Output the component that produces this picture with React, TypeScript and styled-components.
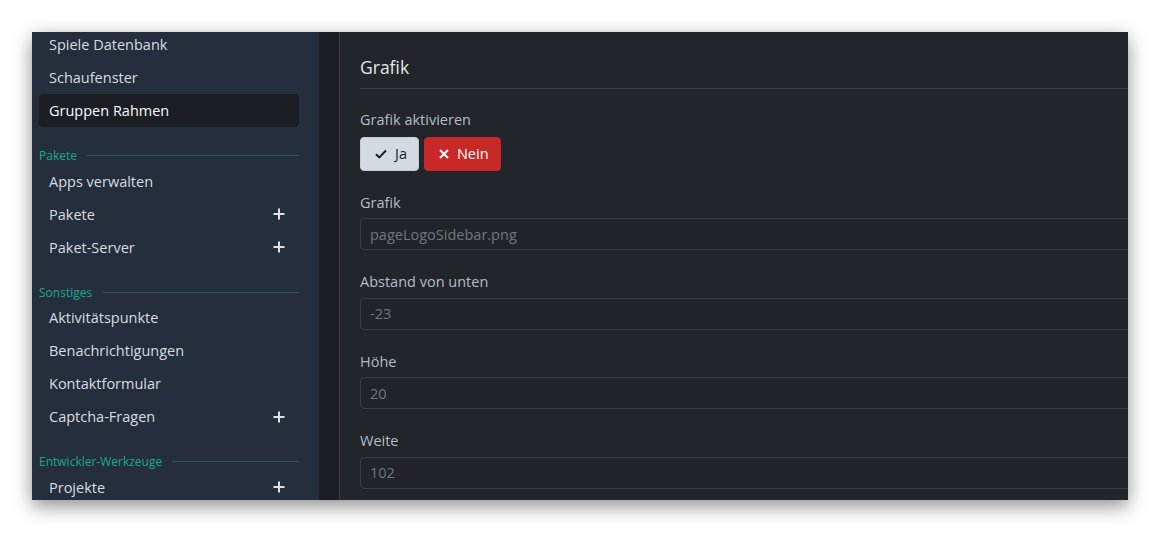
import React from "react";
import styled, { createGlobalStyle } from "styled-components";

const Global = createGlobalStyle`
  html, body { margin: 0; padding: 0; background: #ffffff; }
  body { font-family: "Segoe UI", "Open Sans", "Noto Sans", sans-serif; }
  * { box-sizing: border-box; }
`;

const Page = styled.div`
  width: 1160px;
  height: 533px;
  padding: 32px 32px 33px 32px;
  background: #ffffff;
`;

const Window = styled.div`
  display: flex;
  width: 1096px;
  height: 468px;
  overflow: hidden;
  background: #222529;
  box-shadow: 0 6px 18px rgba(0, 0, 0, 0.45);
`;

const Sidebar = styled.nav`
  flex: 0 0 287px;
  background: #252e3d;
  padding: 0 20px 0 7px;
  overflow: hidden;
`;

const NavList = styled.div`
  display: flex;
  flex-direction: column;
  margin-top: -4px;
`;

const NavItem = styled.div<{ $active?: boolean }>`
  display: flex;
  align-items: center;
  justify-content: space-between;
  flex: 0 0 33px;
  height: 33px;
  padding: 0 14px 0 10px;
  border-radius: 4px;
  font-size: 14.5px;
  color: ${(p) => (p.$active ? "#f8f9fa" : "#d7dce1")};
  background: ${(p) => (p.$active ? "#1b1e23" : "transparent")};
`;

const SectionHead = styled.div`
  display: flex;
  align-items: center;
  gap: 10px;
  flex: 0 0 20px;
  height: 20px;
  margin: 18.5px 0 -1px 0;
  font-size: 12px;
  color: #1aa88f;
  white-space: nowrap;
  &::after {
    content: "";
    flex: 1;
    height: 1px;
    background: #2a5660;
  }
`;

const Gutter = styled.div`
  flex: 0 0 21px;
  background: #1c1e22;
  border-right: 1px solid #383b40;
`;

const Content = styled.main`
  flex: 1;
  min-width: 0;
  padding: 23px 0 0 20px;
  color: #dee2e6;
`;

const Heading = styled.h2`
  margin: 0;
  padding-bottom: 9px;
  font-size: 17.5px;
  font-weight: 400;
  line-height: 24px;
  color: #e4e7ea;
  border-bottom: 1px solid #3d3f45;
`;

const Form = styled.div`
  display: flex;
  flex-direction: column;
  padding-top: 21px;
`;

const Group = styled.div`
  display: flex;
  flex-direction: column;
  margin-bottom: 22px;
`;

const Label = styled.label`
  font-size: 14.5px;
  line-height: 20px;
  color: #b4bdc6;
  margin-bottom: 5.5px;
`;

const ButtonRow = styled.div`
  display: flex;
  gap: 5px;
  margin-top: 1px;
`;

const Toggle = styled.button<{ $variant: "light" | "danger" }>`
  display: flex;
  align-items: center;
  gap: 8px;
  height: 34px;
  padding: 0 11px 0 14px;
  border-radius: 4px;
  font-family: inherit;
  font-size: 14.5px;
  border: 1px solid ${(p) => (p.$variant === "light" ? "#c4ccd3" : "#c42a2a")};
  background: ${(p) => (p.$variant === "light" ? "#d3dae0" : "#c82828")};
  color: ${(p) => (p.$variant === "light" ? "#1c2128" : "#ffffff")};
`;

const Input = styled.div`
  display: flex;
  align-items: center;
  width: 1000px;
  height: 32px;
  padding: 0 9px;
  border: 1px solid #3b3f45;
  border-radius: 4px;
  background: #212428;
  font-size: 14.5px;
  color: #70777e;
`;

const PlusIcon = () => (
  <svg width="12" height="12" viewBox="0 0 12 12" aria-hidden>
    <path d="M6 0.5v11M0.5 6h11" stroke="#dee2e6" strokeWidth="2" />
  </svg>
);

const CheckIcon = () => (
  <svg width="12" height="10" viewBox="0 0 12 10" aria-hidden>
    <path d="M1 5.2l3.3 3.2L11 1.5" stroke="#1c2128" strokeWidth="2" fill="none" />
  </svg>
);

const XIcon = () => (
  <svg width="10" height="10" viewBox="0 0 10 10" aria-hidden>
    <path d="M1 1l8 8M9 1l-8 8" stroke="#ffffff" strokeWidth="2" />
  </svg>
);

type Entry =
  | { kind: "item"; label: string; plus?: boolean; active?: boolean }
  | { kind: "head"; label: string };

const nav: Entry[] = [
  { kind: "item", label: "Spiele Datenbank" },
  { kind: "item", label: "Schaufenster" },
  { kind: "item", label: "Gruppen Rahmen", active: true },
  { kind: "head", label: "Pakete" },
  { kind: "item", label: "Apps verwalten" },
  { kind: "item", label: "Pakete", plus: true },
  { kind: "item", label: "Paket-Server", plus: true },
  { kind: "head", label: "Sonstiges" },
  { kind: "item", label: "Aktivitätspunkte" },
  { kind: "item", label: "Benachrichtigungen" },
  { kind: "item", label: "Kontaktformular" },
  { kind: "item", label: "Captcha-Fragen", plus: true },
  { kind: "head", label: "Entwickler-Werkzeuge" },
  { kind: "item", label: "Projekte", plus: true },
];

const fields = [
  { label: "Grafik", value: "pageLogoSidebar.png" },
  { label: "Abstand von unten", value: "-23" },
  { label: "Höhe", value: "20" },
  { label: "Weite", value: "102" },
];

export default function App() {
  return (
    <Page>
      <Global />
      <Window>
        <Sidebar>
          <NavList>
            {nav.map((e, i) =>
              e.kind === "head" ? (
                <SectionHead key={i}>{e.label}</SectionHead>
              ) : (
                <NavItem key={i} $active={e.active}>
                  <span>{e.label}</span>
                  {e.plus && <PlusIcon />}
                </NavItem>
              )
            )}
          </NavList>
        </Sidebar>
        <Gutter />
        <Content>
          <Heading>Grafik</Heading>
          <Form>
            <Group>
              <Label>Grafik aktivieren</Label>
              <ButtonRow>
                <Toggle $variant="light">
                  <CheckIcon />
                  Ja
                </Toggle>
                <Toggle $variant="danger">
                  <XIcon />
                  Nein
                </Toggle>
              </ButtonRow>
            </Group>
            {fields.map((f) => (
              <Group key={f.label}>
                <Label>{f.label}</Label>
                <Input>{f.value}</Input>
              </Group>
            ))}
          </Form>
        </Content>
      </Window>
    </Page>
  );
}
